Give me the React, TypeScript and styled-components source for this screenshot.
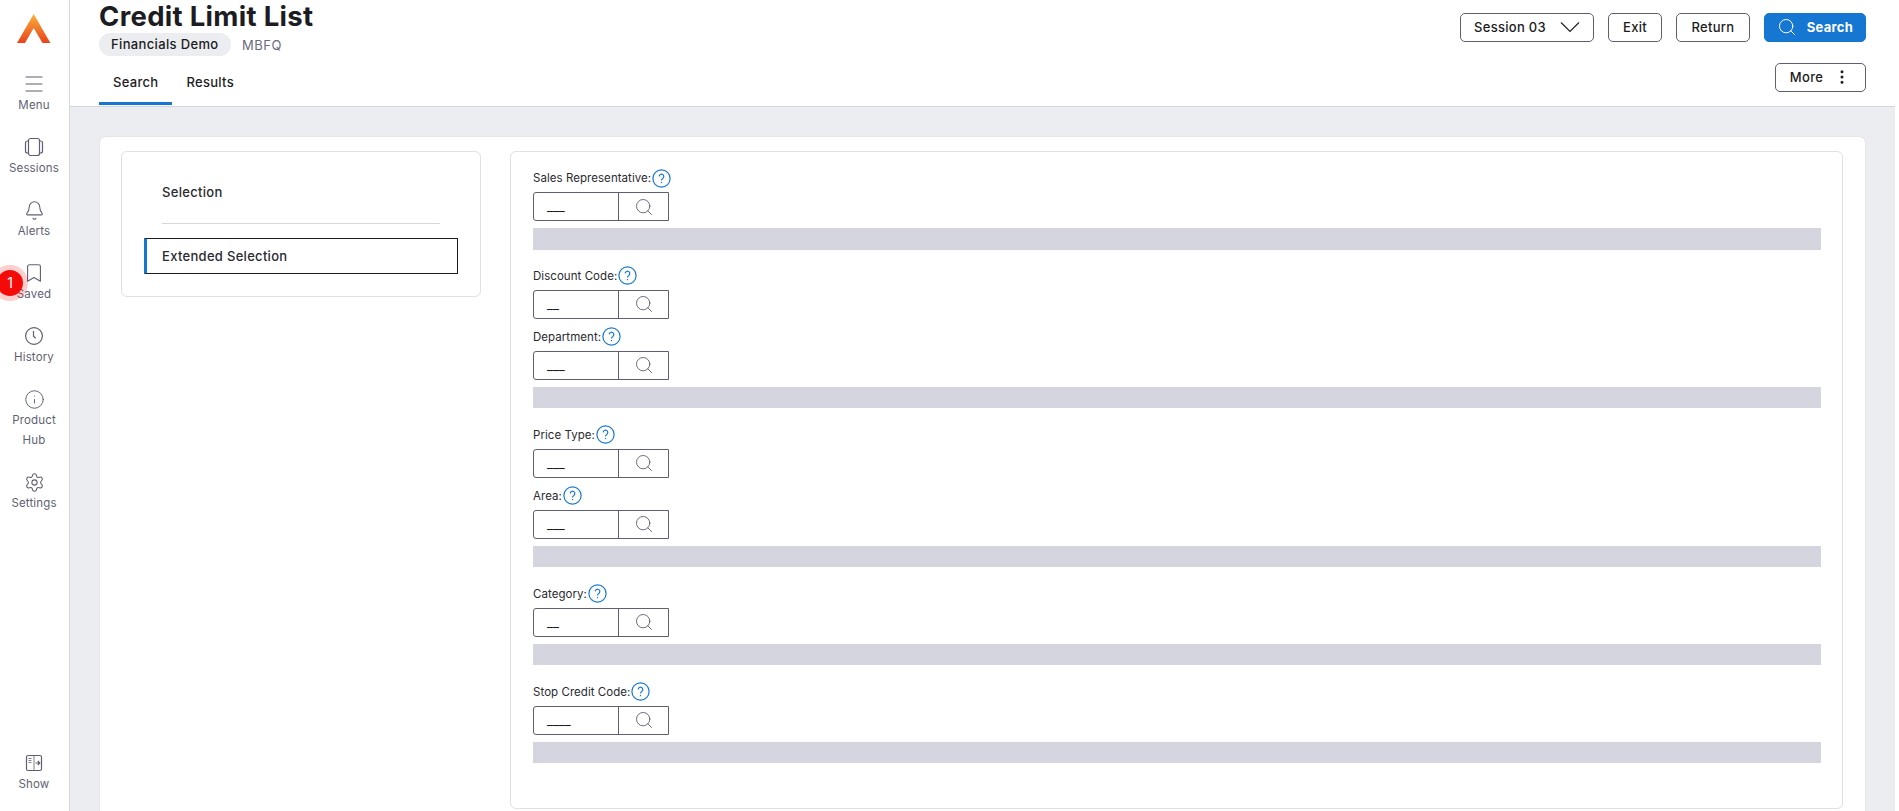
import React from "react";
import styled, { createGlobalStyle } from "styled-components";
import { Bell, Bookmark, Info, Menu, MoreVertical, Search, Settings } from "lucide-react";

const GlobalStyle = createGlobalStyle`
  html, body {
    margin: 0;
    height: 100%;
    overflow: hidden;
    background: #fff;
  }
  * {
    box-sizing: border-box;
  }
  body {
    font-family: Inter, "Liberation Sans", sans-serif;
    color: #1c1c22;
  }
`;

const Page = styled.div`
  display: flex;
  height: 811px;
  padding-right: 4px;
  background: #fff;
  overflow: hidden;
`;
const Sidebar = styled.aside`
  position: relative;
  flex: 0 0 70px;
  display: flex;
  flex-direction: column;
  align-items: center;
  padding: 14px 1px 0 0;
  border-right: 1.5px solid #d5d5df;
  background: #fff;
`;
const LogoBox = styled.div`
  height: 29px;
  margin-bottom: 30px;
`;
const NavItem = styled.div<{ $bottom?: boolean }>`
  display: flex;
  flex-direction: column;
  align-items: center;
  width: 100%;
  margin-bottom: ${(p) => (p.$bottom ? "17px" : "21px")};
  margin-top: ${(p) => (p.$bottom ? "auto" : "0")};
  color: #5f5f73;
  svg {
    display: block;
  }
`;
const NavIcon = styled.div`
  height: 22px;
  display: flex;
  align-items: center;
  justify-content: center;
`;
const NavLabel = styled.div`
  font-size: 11.5px;
  line-height: 20px;
  letter-spacing: 0.15px;
  text-align: center;
  color: #5f5f73;
`;
const Badge = styled.div`
  position: absolute;
  left: -3px;
  top: 270px;
  width: 26px;
  height: 26px;
  border-radius: 50%;
  background: #f50a0a;
  box-shadow: 0 0 0 5px rgba(245, 10, 10, 0.2);
  color: #fff;
  font-size: 14px;
  line-height: 26px;
  text-align: center;
`;
const Main = styled.div`
  flex: 1;
  min-width: 0;
  display: flex;
  flex-direction: column;
`;
const Header = styled.header`
  flex: 0 0 107px;
  display: flex;
  justify-content: space-between;
  padding: 0 29px 0 29px;
  border-bottom: 1.5px solid #d5d5df;
`;
const TitleBlock = styled.div`
  display: flex;
  flex-direction: column;
  padding-top: 1px;
`;
const Title = styled.h1`
  margin: 0;
  font-size: 27.5px;
  line-height: 30px;
  font-weight: 700;
  letter-spacing: 0.3px;
  color: #1c1c22;
`;
const SubRow = styled.div`
  display: flex;
  align-items: center;
  gap: 11px;
  margin-top: 2px;
`;
const Chip = styled.span`
  height: 23px;
  width: 132px;
  padding-left: 12px;
  border-radius: 12px;
  background: #ecedf0;
  font-size: 13px;
  font-weight: 500;
  line-height: 22px;
  letter-spacing: 0.35px;
  white-space: nowrap;
`;
const Code = styled.span`
  font-size: 13px;
  letter-spacing: 0.5px;
  color: #6b6b80;
`;
const Tabs = styled.nav`
  display: flex;
  margin-top: 14px;
`;
const Tab = styled.div<{ $active?: boolean }>`
  height: 35px;
  padding: 0 14px;
  font-size: 13px;
  font-weight: 500;
  line-height: 24px;
  letter-spacing: 0.3px;
  border-bottom: 3px solid ${(p) => (p.$active ? "#1677d2" : "transparent")};
`;
const Actions = styled.div`
  display: flex;
  flex-direction: column;
  align-items: flex-end;
  gap: 21px;
  padding-top: 13px;
`;
const ActionRow = styled.div`
  display: flex;
  gap: 14px;
`;
const Button = styled.button<{ $primary?: boolean; $width: number }>`
  width: ${(p) => p.$width}px;
  height: 29px;
  display: flex;
  align-items: center;
  justify-content: center;
  gap: 10px;
  padding: 0 0 1px;
  border: 1px solid ${(p) => (p.$primary ? "#1677d2" : "#5f5f73")};
  border-radius: 5px;
  background: ${(p) => (p.$primary ? "#1677d2" : "#fff")};
  color: ${(p) => (p.$primary ? "#fff" : "#1c1c22")};
  font-family: inherit;
  font-size: 13px;
  font-weight: ${(p) => (p.$primary ? 700 : 500)};
  letter-spacing: 0.3px;
`;
const SessionChevron = styled.svg`
  margin-left: 4px;
`;
const Content = styled.main`
  flex: 1;
  min-height: 0;
  padding: 30px 30px 0;
  background: #ecedf0;
`;
const OuterCard = styled.div`
  display: flex;
  gap: 29px;
  height: 700px;
  padding: 14px 22px 0 21px;
  background: #fff;
  border-radius: 6px 6px 0 0;
  box-shadow: 0 0 0 1px #e6e6ec;
`;
const SelectionPanel = styled.div`
  flex: 0 0 360px;
  align-self: flex-start;
  height: 146px;
  padding: 0 22px;
  border: 1px solid #e0e0e7;
  border-radius: 6px;
`;
const SelectionItem = styled.div`
  height: 71px;
  padding: 0 18px;
  font-size: 13px;
  font-weight: 500;
  line-height: 80px;
  letter-spacing: 0.3px;
  color: #2a2a30;
`;
const Rule = styled.div`
  margin: 0 18px 14px;
  border-top: 1px solid #d5d5df;
`;
const ActiveItem = styled.div`
  height: 36px;
  padding-left: 15px;
  border: 1px solid #1c1c22;
  border-left: 3px solid #1677d2;
  font-size: 13px;
  font-weight: 500;
  line-height: 35px;
  letter-spacing: 0.3px;
  color: #2a2a30;
`;
const FormPanel = styled.div`
  flex: 1;
  min-width: 0;
  height: 658px;
  padding: 16px 21px 0 22px;
  border: 1px solid #e0e0e7;
  border-radius: 6px;
`;
const Field = styled.div`
  margin-bottom: 8px;
`;
const LabelRow = styled.div`
  display: flex;
  align-items: center;
  gap: 1px;
  height: 20px;
  margin-bottom: 4px;
  font-size: 11.5px;
  letter-spacing: 0.05px;
  color: #2a2a30;
`;
const Lookup = styled.div`
  display: flex;
  width: 136px;
  height: 29px;
  border: 1px solid #5f5f73;
  border-radius: 3px 0 0 3px;
`;
const LookupValue = styled.div`
  width: 85px;
  padding-left: 13px;
  border-right: 1px solid #5f5f73;
  font-size: 13px;
  line-height: 27px;
  letter-spacing: 0;
  color: #1c1c22;
`;
const LookupButton = styled.div`
  flex: 1;
  display: flex;
  align-items: center;
  justify-content: center;
  color: #5f5f73;
`;
const GroupBar = styled.div`
  height: 21.5px;
  margin-top: -1px;
  margin-bottom: 16.4px;
  background: #d5d5df;
`;

function Logo() {
  return (
    <svg width="34" height="29" viewBox="0 0 34 29">
      <defs>
        <linearGradient id="logoFill" x1="0" y1="0" x2="0" y2="1">
          <stop offset="0" stopColor="#fbb03b" />
          <stop offset="1" stopColor="#e8431a" />
        </linearGradient>
      </defs>
      <polygon points="16.7,0 33.4,29 25.5,29 16.7,14 8,29 0,29" fill="url(#logoFill)" />
    </svg>
  );
}

function SessionsIcon() {
  return (
    <svg width="20" height="20" viewBox="0 0 20 20" fill="none" stroke="currentColor" strokeWidth="1.2">
      <rect x="4.5" y="1.5" width="11" height="17" rx="2" />
      <path d="M4.5 4H3.5a2 2 0 0 0-2 2v8a2 2 0 0 0 2 2h1M15.5 4h1a2 2 0 0 1 2 2v8a2 2 0 0 1-2 2h-1" />
    </svg>
  );
}

function HistoryIcon() {
  return (
    <svg width="20" height="20" viewBox="0 0 20 20" fill="none" stroke="currentColor" strokeWidth="1.2">
      <circle cx="10" cy="10" r="8.4" />
      <path d="M9.5 5v5.2l2.2 2" />
    </svg>
  );
}

function ShowIcon() {
  return (
    <svg width="18" height="18" viewBox="0 0 18 18" fill="none" stroke="currentColor" strokeWidth="1.2">
      <rect x="1.5" y="1.5" width="15" height="15" rx="1.5" />
      <path d="M9 1.5v15M3.5 4.5h3M3.5 6.5h3M3.5 8.5h3" strokeWidth="0.8" />
      <path d="M10.5 9h4M12.8 7l2 2-2 2" />
    </svg>
  );
}

function HelpIcon() {
  return (
    <svg width="19" height="19" viewBox="0 0 19 19" fill="none" stroke="#1677d2" strokeWidth="1.2">
      <circle cx="9.5" cy="9.5" r="8.6" />
      <path d="M7.2 7.4a2.3 2.3 0 1 1 3.6 2c-.8.5-1.3 1-1.3 2.1" />
      <path d="M9.5 13v1.2" />
    </svg>
  );
}

function LookupField({ label, value }: { label: string; value: string }) {
  return (
    <Field>
      <LabelRow>
        {label}:
        <HelpIcon />
      </LabelRow>
      <Lookup>
        <LookupValue>{value}</LookupValue>
        <LookupButton>
          <Search size={20} strokeWidth={1.1} />
        </LookupButton>
      </Lookup>
    </Field>
  );
}

const groups = [
  [{ label: "Sales Representative", value: "___" }],
  [
    { label: "Discount Code", value: "__" },
    { label: "Department", value: "___" },
  ],
  [
    { label: "Price Type", value: "___" },
    { label: "Area", value: "___" },
  ],
  [{ label: "Category", value: "__" }],
  [{ label: "Stop Credit Code", value: "____" }],
];

export default function App() {
  return (
    <Page>
      <GlobalStyle />
      <Sidebar>
        <LogoBox>
          <Logo />
        </LogoBox>
        <NavItem>
          <NavIcon>
            <Menu size={24} strokeWidth={1.1} />
          </NavIcon>
          <NavLabel>Menu</NavLabel>
        </NavItem>
        <NavItem>
          <NavIcon>
            <SessionsIcon />
          </NavIcon>
          <NavLabel>Sessions</NavLabel>
        </NavItem>
        <NavItem>
          <NavIcon>
            <Bell size={21} strokeWidth={1.2} />
          </NavIcon>
          <NavLabel>Alerts</NavLabel>
        </NavItem>
        <NavItem>
          <NavIcon>
            <Bookmark size={22} strokeWidth={1.2} />
          </NavIcon>
          <NavLabel>Saved</NavLabel>
        </NavItem>
        <NavItem>
          <NavIcon>
            <HistoryIcon />
          </NavIcon>
          <NavLabel>History</NavLabel>
        </NavItem>
        <NavItem>
          <NavIcon>
            <Info size={21} strokeWidth={1.1} />
          </NavIcon>
          <NavLabel>
            Product
            <br />
            Hub
          </NavLabel>
        </NavItem>
        <NavItem>
          <NavIcon>
            <Settings size={21} strokeWidth={1.2} />
          </NavIcon>
          <NavLabel>Settings</NavLabel>
        </NavItem>
        <NavItem $bottom>
          <NavIcon>
            <ShowIcon />
          </NavIcon>
          <NavLabel>Show</NavLabel>
        </NavItem>
        <Badge>1</Badge>
      </Sidebar>
      <Main>
        <Header>
          <TitleBlock>
            <Title>Credit Limit List</Title>
            <SubRow>
              <Chip>Financials Demo</Chip>
              <Code>MBFQ</Code>
            </SubRow>
            <Tabs>
              <Tab $active>Search</Tab>
              <Tab>Results</Tab>
            </Tabs>
          </TitleBlock>
          <Actions>
            <ActionRow>
              <Button $width={134}>
                Session 03
                <SessionChevron width="20" height="12" viewBox="0 0 20 12" fill="none" stroke="#1c1c22" strokeWidth="1.1">
                  <path d="M1 1.5l9 9 9-9" />
                </SessionChevron>
              </Button>
              <Button $width={54}>Exit</Button>
              <Button $width={74}>Return</Button>
              <Button $primary $width={102}>
                <Search size={20} strokeWidth={1.2} />
                Search
              </Button>
            </ActionRow>
            <Button $width={91}>
              More
              <MoreVertical size={18} strokeWidth={2} />
            </Button>
          </Actions>
        </Header>
        <Content>
          <OuterCard>
            <SelectionPanel>
              <SelectionItem>Selection</SelectionItem>
              <Rule />
              <ActiveItem>Extended Selection</ActiveItem>
            </SelectionPanel>
            <FormPanel>
              {groups.map((fields) => (
                <div key={fields[0].label}>
                  {fields.map((f) => (
                    <LookupField key={f.label} label={f.label} value={f.value} />
                  ))}
                  <GroupBar />
                </div>
              ))}
            </FormPanel>
          </OuterCard>
        </Content>
      </Main>
    </Page>
  );
}
